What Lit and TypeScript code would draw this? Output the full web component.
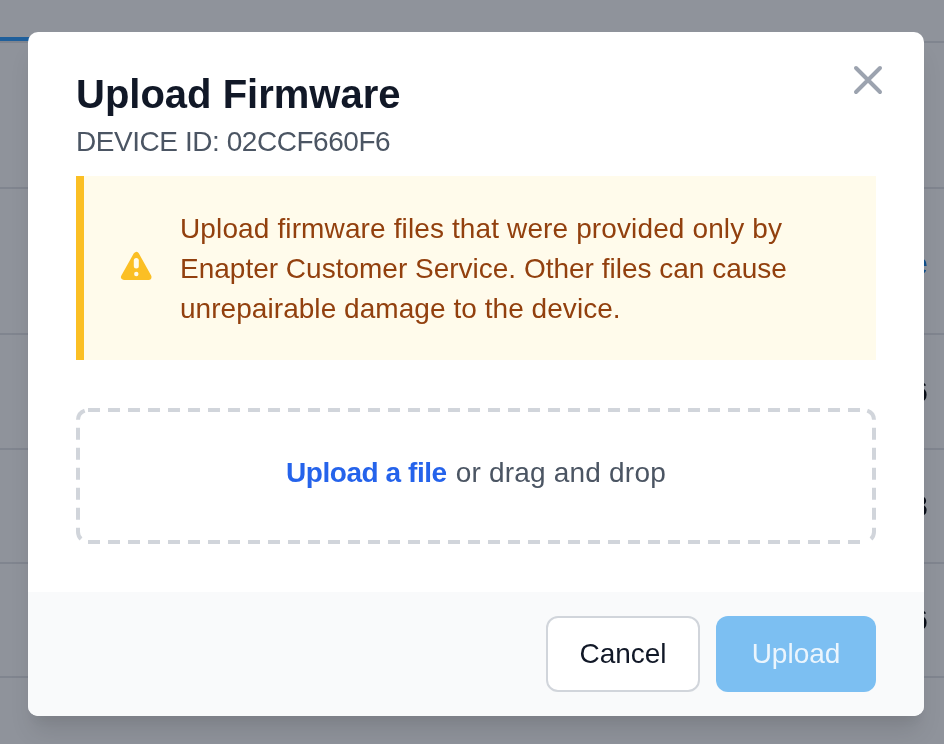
import { LitElement, html, css } from 'lit';
import { customElement } from 'lit/decorators.js';

const ROWS = [
  { height: 146, text: '', link: false },
  { height: 146, text: 'Active', link: true },
  { height: 115, text: '1.2.6', link: false },
  { height: 114, text: '1.2.8', link: false },
  { height: 114, text: '1.2.6', link: false },
];

@customElement('app-root')
export class AppRoot extends LitElement {
  static styles = css`
    :host {
      display: block;
      position: relative;
      width: 944px;
      height: 744px;
      overflow: hidden;
      background: #fff;
      font-family: 'Liberation Sans', Arial, sans-serif;
    }
    .page {
      height: 744px;
    }
    .tabs {
      display: flow-root;
      height: 43px;
      box-sizing: border-box;
      border-bottom: 2px solid #e5e7eb;
    }
    .tab {
      display: flow-root;
      height: 41px;
      width: 200px;
      box-sizing: border-box;
      border-bottom: 4px solid #36a4ff;
      color: #8cc8ff;
      font-size: 28px;
      line-height: 28px;
      padding-left: 14px;
      white-space: nowrap;
    }
    .tab span {
      display: block;
      margin-top: -29px;
    }
    .row {
      display: flex;
      align-items: center;
      justify-content: flex-end;
      box-sizing: border-box;
      border-bottom: 2px solid #e5e7eb;
      padding-right: 16px;
      color: #111827;
      font-size: 30px;
    }
    .row.link {
      color: #1d8ae6;
      padding-top: 5px;
    }
    .scrim {
      position: absolute;
      inset: 0;
      background: #8f939b;
      mix-blend-mode: multiply;
    }
    .overlay {
      position: absolute;
      inset: 0;
      display: flex;
      align-items: flex-start;
      padding: 32px 0 0 28px;
    }
    .modal {
      position: relative;
      width: 896px;
      height: 684px;
      display: flex;
      flex-direction: column;
      background: #fff;
      border-radius: 10px;
      overflow: hidden;
      box-shadow: 0 20px 25px -5px rgba(0, 0, 0, 0.1), 0 10px 10px -5px rgba(0, 0, 0, 0.04);
    }
    .body {
      flex: 1;
      padding: 39px 48px 0;
    }
    .close {
      position: absolute;
      top: 24px;
      right: 32px;
      width: 48px;
      height: 48px;
      color: #9ca3af;
    }
    h1 {
      margin: 0;
      font-size: 40px;
      line-height: 46px;
      font-weight: 700;
      color: #111827;
    }
    .device {
      font-size: 28px;
      line-height: 40px;
      letter-spacing: -0.45px;
      color: #4b5563;
      margin: 5px 0 14px;
    }
    .alert {
      display: flex;
      align-items: center;
      gap: 24px;
      height: 184px;
      box-sizing: border-box;
      padding-left: 32px;
      background: #fffbeb;
      border-left: 8px solid #fbbf24;
      color: #92400e;
      font-size: 28px;
      line-height: 40px;
    }
    .alert svg {
      flex: none;
      width: 40px;
      height: 40px;
    }
    .alert-text {
      padding-top: 2px;
    }
    .line-1 {
      letter-spacing: 0.125px;
    }
    .line-3 {
      letter-spacing: 0.05px;
    }
    .drop {
      position: relative;
      display: flex;
      align-items: center;
      justify-content: center;
      height: 136px;
      box-sizing: border-box;
      margin-top: 48px;
      padding-bottom: 6px;
      font-size: 28px;
      letter-spacing: 0.2px;
      color: #4b5563;
    }
    .drop svg {
      position: absolute;
      inset: 0;
      width: 800px;
      height: 136px;
      fill: none;
      stroke: #d1d5db;
      stroke-width: 4;
      stroke-dasharray: 12 8;
    }
    .drop a {
      color: #2563eb;
      font-weight: 700;
      letter-spacing: -0.45px;
      margin-right: 9px;
    }
    .footer {
      display: flex;
      justify-content: flex-end;
      gap: 16px;
      height: 124px;
      box-sizing: border-box;
      padding: 24px 48px;
      background: #f9fafb;
    }
    button {
      height: 76px;
      box-sizing: border-box;
      border-radius: 12px;
      font: inherit;
      font-size: 28px;
    }
    .cancel {
      width: 154px;
      background: #fff;
      border: 2px solid #d1d5db;
      color: #111827;
    }
    .upload {
      width: 160px;
      background: #7cbff2;
      border: 0;
      color: #ebf5fd;
    }
  `;

  render() {
    return html`
      <div class="page">
        <div class="tabs"><div class="tab"><span>Logging Groups</span></div></div>
        ${ROWS.map(
          (r) => html`<div class="row ${r.link ? 'link' : ''}" style="height:${r.height}px">${r.text}</div>`
        )}
      </div>
      <div class="scrim"></div>
      <div class="overlay">
        <div class="modal">
          <svg class="close" viewBox="0 0 48 48" fill="none" stroke="currentColor" stroke-width="4" stroke-linecap="round">
            <path d="M12 12 L36 36 M36 12 L12 36" />
          </svg>
          <div class="body">
            <h1>Upload Firmware</h1>
            <div class="device">DEVICE ID: 02CCF660F6</div>
            <div class="alert">
              <svg viewBox="0 0 40 40">
                <path d="M20.3 7L8 29H32.5Z" fill="#fbbf24" stroke="#fbbf24" stroke-width="6" stroke-linejoin="round" />
                <rect x="17.8" y="10" width="5" height="10.5" rx="2.5" fill="#fffbeb" />
                <circle cx="20.3" cy="26" r="2.2" fill="#fffbeb" />
              </svg>
              <div class="alert-text">
                <span class="line-1">Upload firmware files that were provided only by</span><br />
                Enapter Customer Service. Other files can cause<br />
                <span class="line-3">unrepairable damage to the device.</span>
              </div>
            </div>
            <div class="drop">
              <svg viewBox="0 0 800 136">
                <path d="M12 2H788" />
                <path d="M12 134H788" />
                <path d="M5 131A10 10 0 0 1 2 124V12A10 10 0 0 1 12 2" />
                <path d="M795 131A10 10 0 0 0 798 124V12A10 10 0 0 0 788 2" />
              </svg>
              <a>Upload a file</a> or drag and drop
            </div>
          </div>
          <div class="footer">
            <button class="cancel">Cancel</button>
            <button class="upload">Upload</button>
          </div>
        </div>
      </div>
    `;
  }
}
